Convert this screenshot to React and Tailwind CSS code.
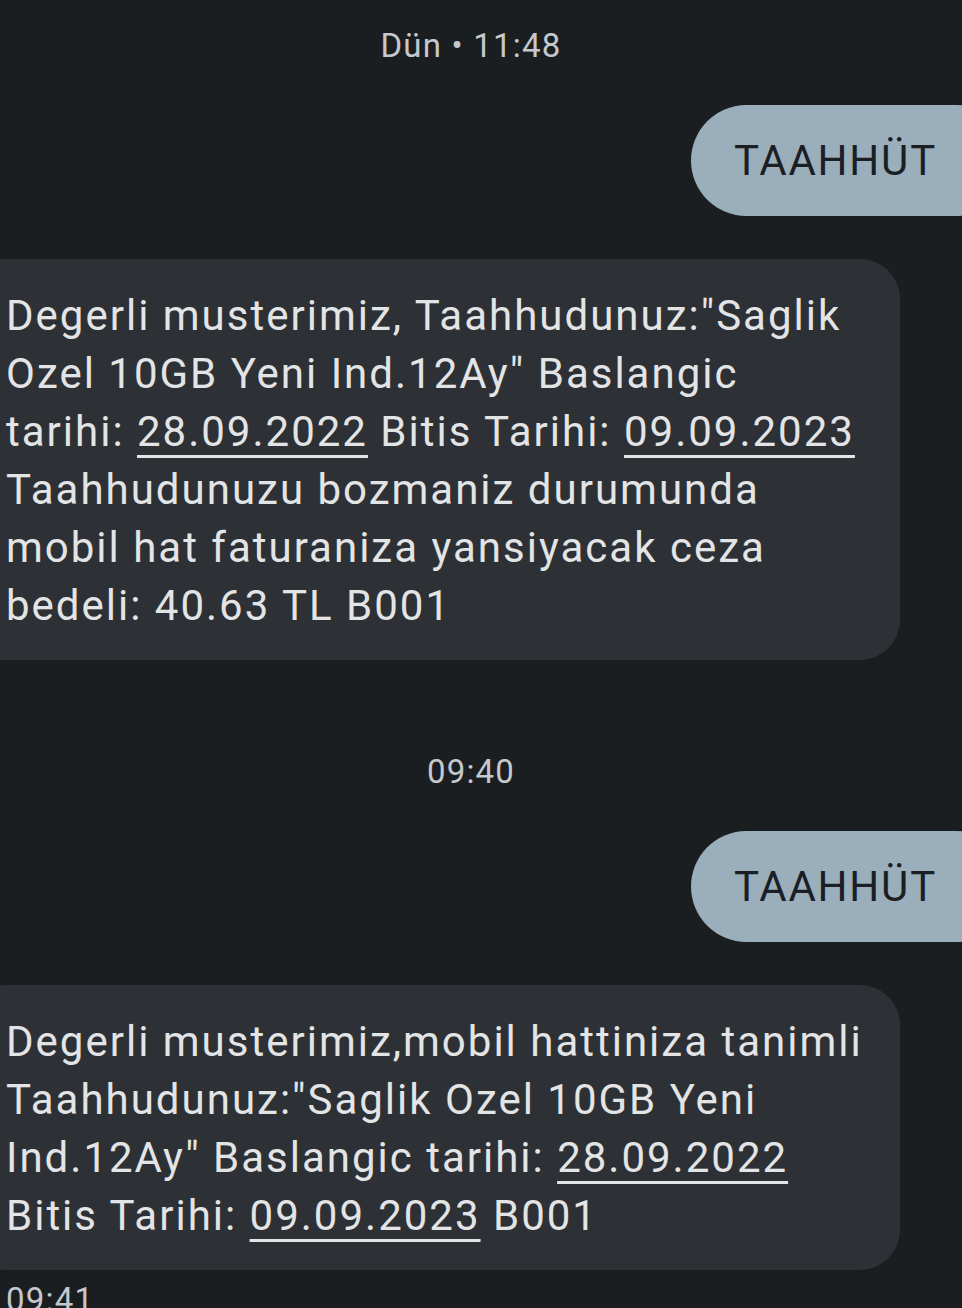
const font = { fontFamily: 'Roboto, "Noto Sans", sans-serif' };

function Stamp({ children, className = '' }) {
  return (
    <div className={`text-[33px] leading-[40px] tracking-[1.2px] text-[#c5c8cc] ${className}`}>
      {children}
    </div>
  );
}

function Outgoing({ text, className = '' }) {
  return (
    <div className={`flex justify-end ${className}`}>
      <div className="-mr-[50px] rounded-full bg-[#9aaebb] pl-[43px] pr-[75px] pt-[27px] pb-[26px] text-[42px] leading-[58px] tracking-[1.8px] text-[#1b1f23]">
        {text}
      </div>
    </div>
  );
}

function U({ children }) {
  return (
    <span className="underline decoration-[3px] underline-offset-[9px]">{children}</span>
  );
}

function Incoming({ lines, className = '' }) {
  return (
    <div
      className={`-ml-[34px] w-[934px] rounded-[40px] bg-[#2d3135] pl-[40px] pt-[28px] pb-[25px] text-[42px] leading-[58px] tracking-[2px] text-[#e3e4e6] ${className}`}
    >
      {lines.map((l, i) => (
        <div key={i} className="whitespace-nowrap">
          {l}
        </div>
      ))}
    </div>
  );
}

export default function App() {
  return (
    <div className="min-h-[1308px] w-full overflow-hidden bg-[#1b1e21]" style={font}>
      <div className="flex flex-col pt-[26px]">
        <Stamp className="pr-[20px] text-center">Dün • 11:48</Stamp>
        <Outgoing text="TAAHHÜT" className="mt-[39px]" />
        <Incoming
          className="mt-[43px]"
          lines={[
            'Degerli musterimiz, Taahhudunuz:"Saglik',
            'Ozel 10GB Yeni Ind.12Ay" Baslangic',
            <>
              tarihi: <U>28.09.2022</U> Bitis Tarihi: <U>09.09.2023</U>
            </>,
            'Taahhudunuzu bozmaniz durumunda',
            'mobil hat faturaniza yansiyacak ceza',
            'bedeli: 40.63 TL B001',
          ]}
        />
        <Stamp className="mt-[92px] pr-[20px] text-center">09:40</Stamp>
        <Outgoing text="TAAHHÜT" className="mt-[39px]" />
        <Incoming
          className="mt-[43px]"
          lines={[
            'Degerli musterimiz,mobil hattiniza tanimli',
            'Taahhudunuz:"Saglik Ozel 10GB Yeni',
            <>
              Ind.12Ay" Baslangic tarihi: <U>28.09.2022</U>
            </>,
            <>
              Bitis Tarihi: <U>09.09.2023</U> B001
            </>,
          ]}
        />
        <Stamp className="mt-[10px] pl-[6px]">09:41</Stamp>
      </div>
    </div>
  );
}
